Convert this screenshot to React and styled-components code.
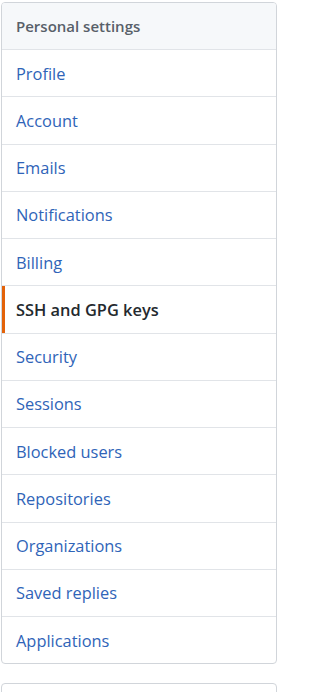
import React from 'react';
import styled, { createGlobalStyle } from 'styled-components';

const GlobalStyle = createGlobalStyle`
  html, body {
    margin: 0;
    padding: 0;
    background: #fff;
  }
  body {
    font-family: "Open Sans", "Noto Sans", "Liberation Sans", sans-serif;
  }
  * {
    box-sizing: border-box;
  }
`;

const Page = styled.div`
  width: 276px;
  margin: 2px 0 0 1px;
  display: flex;
  flex-direction: column;
  gap: 19px;
`;

const Menu = styled.nav`
  border: 1px solid #d1d5da;
  border-radius: 4px;
  overflow: hidden;
  background: #fff;
`;

const MenuHeading = styled.h3`
  margin: 0;
  height: 47px;
  display: flex;
  align-items: center;
  padding: 0 14px;
  background: #f6f8fa;
  border-bottom: 1px solid #e1e4e8;
  font-size: 15px;
  font-weight: 600;
  color: #586069;
`;

const MenuItem = styled.a`
  position: relative;
  display: flex;
  align-items: center;
  height: 47.25px;
  padding: 0 14px;
  font-size: 16.4px;
  text-decoration: none;
  color: ${props => (props.selected ? '#24292e' : '#2f64b8')};
  font-weight: ${props => (props.selected ? 600 : 400)};
  border-bottom: 1px solid #e1e4e8;
  cursor: pointer;

  &:last-child {
    border-bottom: none;
    height: 46.25px;
  }

  &::before {
    content: '';
    position: absolute;
    left: 0;
    top: 0;
    bottom: 0;
    width: 3px;
    background: ${props => (props.selected ? '#e36209' : 'transparent')};
  }
`;

const NextBox = styled.div`
  height: 40px;
  border: 1px solid #d1d5da;
  border-radius: 4px;
  background: #fff;
`;

const items = [
  'Profile',
  'Account',
  'Emails',
  'Notifications',
  'Billing',
  'SSH and GPG keys',
  'Security',
  'Sessions',
  'Blocked users',
  'Repositories',
  'Organizations',
  'Saved replies',
  'Applications',
];

export default function App() {
  return (
    <>
      <GlobalStyle />
      <Page>
        <Menu>
          <MenuHeading>Personal settings</MenuHeading>
          {items.map(item => (
            <MenuItem key={item} selected={item === 'SSH and GPG keys'}>
              {item}
            </MenuItem>
          ))}
        </Menu>
        <NextBox />
      </Page>
    </>
  );
}
